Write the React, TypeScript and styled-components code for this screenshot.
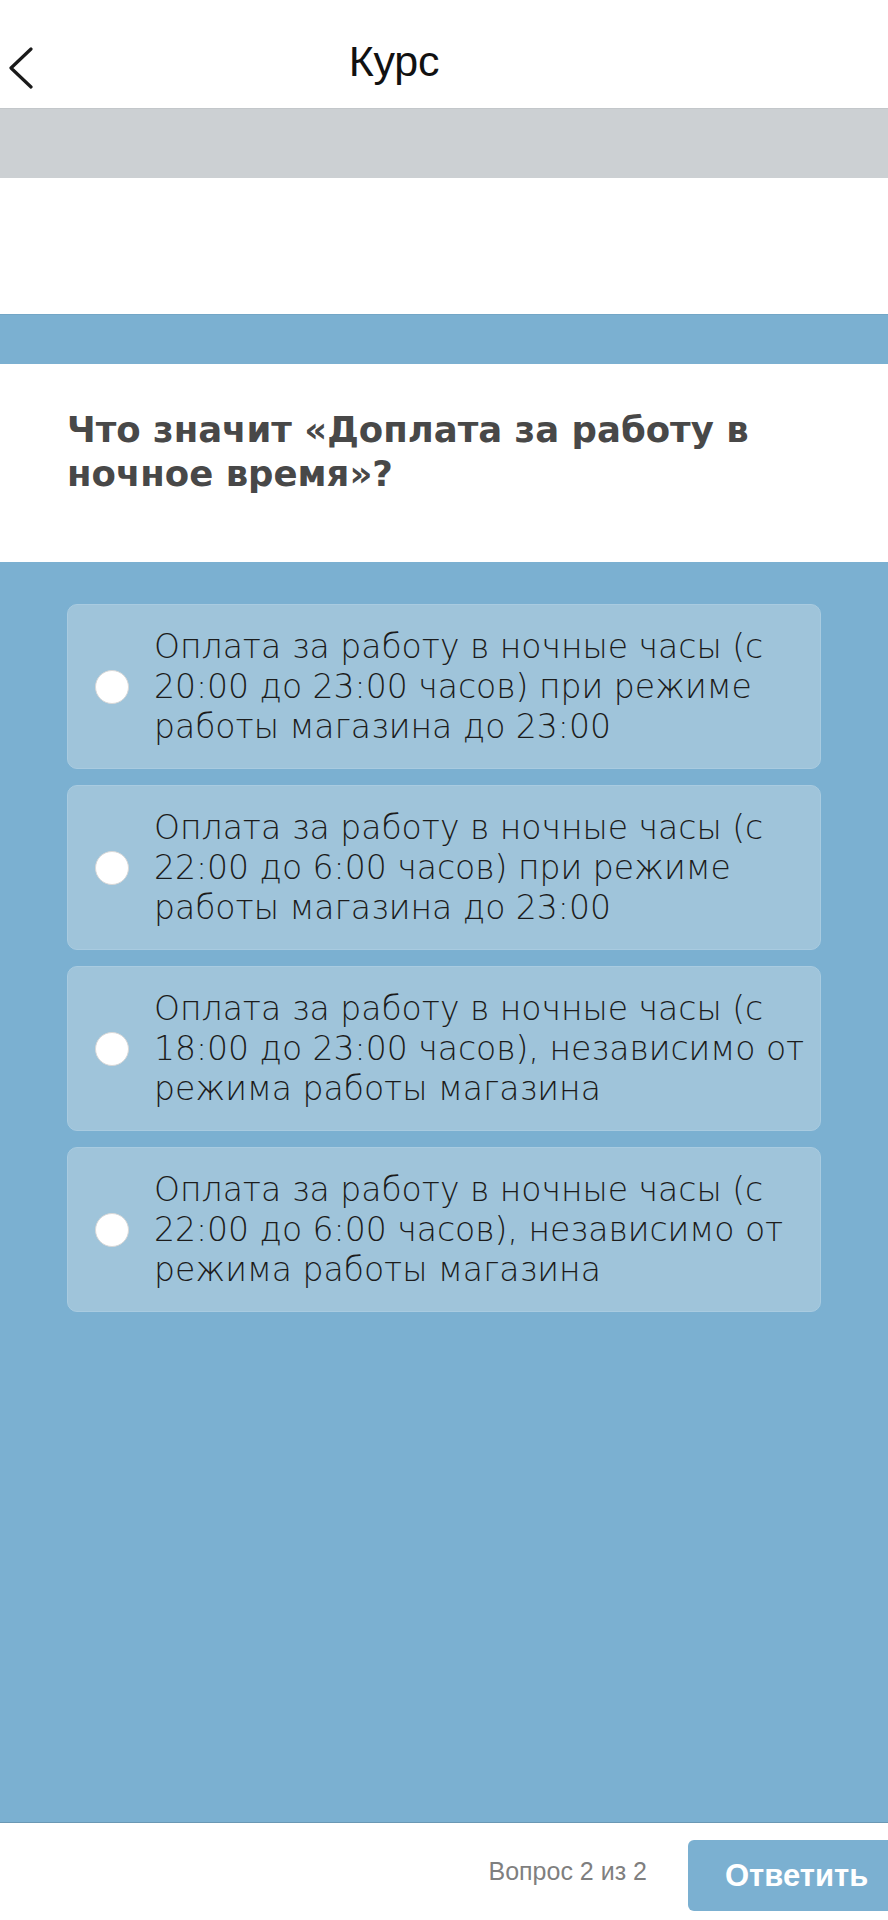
import React from "react";
import styled, { createGlobalStyle } from "styled-components";

const Global = createGlobalStyle`
  html, body { margin: 0; padding: 0; background: #ffffff; }
  body { font-family: "Liberation Sans", Arial, sans-serif; }
  * { box-sizing: border-box; }
`;

const Page = styled.div`
  width: 888px;
  min-height: 1920px;
  display: flex;
  flex-direction: column;
  overflow: hidden;
`;

const Header = styled.header`
  height: 108px;
  display: flex;
  align-items: center;
  padding-top: 14px;
  background: #ffffff;
`;

const BackButton = styled.button`
  width: 56px;
  height: 44px;
  padding: 0 0 0 8px;
  margin-top: 14px;
  border: none;
  background: transparent;
  display: flex;
  align-items: center;
  cursor: pointer;
`;

const Title = styled.h1`
  flex: 1;
  margin: 0;
  text-align: center;
  font-family: "Liberation Sans", Arial, sans-serif;
  font-weight: 400;
  font-size: 43px;
  line-height: 50px;
  color: #111111;
  letter-spacing: -0.3px;
`;

const HeaderSpacer = styled.div`
  width: 156px;
`;

const ProgressBar = styled.div`
  height: 70px;
  background: #ccd0d3;
  box-shadow: inset 0 1px 0 #c3c7ca;
`;

const WhiteGap = styled.div`
  height: 136px;
  background: #ffffff;
`;

const BlueBand = styled.div`
  height: 50px;
  background: #7bb0d1;
  border-top: 1px solid #73a6c6;
`;

const QuestionBlock = styled.section`
  height: 198px;
  background: #ffffff;
  padding: 44px 67px 0;
`;

const Question = styled.h2`
  margin: 0;
  font-family: "DejaVu Sans", Inter, sans-serif;
  font-weight: 700;
  font-size: 35.5px;
  line-height: 44px;
  color: #484848;
  letter-spacing: 0px;
`;

const Answers = styled.main`
  flex: 1;
  background: #7bb0d1;
  padding: 42px 67px 0;
  display: flex;
  flex-direction: column;
  gap: 16px;
`;

const Option = styled.label`
  height: 165px;
  display: flex;
  align-items: center;
  gap: 25px;
  padding: 0 12px 0 27px;
  background: #9fc4da;
  border: 1px solid #a9cbe0;
  border-radius: 10px;
  cursor: pointer;
`;

const Radio = styled.span`
  flex: none;
  width: 34px;
  height: 34px;
  border-radius: 50%;
  background: #ffffff;
  border: 1px solid #d8d8d8;
`;

const OptionText = styled.span`
  font-family: "DejaVu Sans ExtraLight", "DejaVu Sans", sans-serif;
  font-weight: 200;
  font-size: 33px;
  line-height: 40px;
  color: #1c1c1c;
  white-space: nowrap;
`;

const Footer = styled.footer`
  height: 98px;
  background: #ffffff;
  border-top: 1px solid #6a98b4;
  display: flex;
  align-items: flex-start;
  padding-top: 17px;
  justify-content: flex-end;
  gap: 41px;
  margin-right: -20px;
`;

const Counter = styled.span`
  margin-top: 17px;
  font-family: "Liberation Sans", Arial, sans-serif;
  font-size: 25px;
  color: #7f7f7f;
`;

const AnswerButton = styled.button`
  width: 220px;
  height: 71px;
  border: none;
  border-radius: 6px;
  background: #7bb0d1;
  color: #ffffff;
  font-family: "Liberation Sans", Arial, sans-serif;
  font-weight: 700;
  font-size: 31px;
  text-align: left;
  padding: 0 0 0 37px;
  cursor: pointer;
`;

const options: string[][] = [
  [
    "Оплата за работу в ночные часы (с",
    "20:00 до 23:00 часов) при режиме",
    "работы магазина до 23:00",
  ],
  [
    "Оплата за работу в ночные часы (с",
    "22:00 до 6:00 часов) при режиме",
    "работы магазина до 23:00",
  ],
  [
    "Оплата за работу в ночные часы (с",
    "18:00 до 23:00 часов), независимо от",
    "режима работы магазина",
  ],
  [
    "Оплата за работу в ночные часы (с",
    "22:00 до 6:00 часов), независимо от",
    "режима работы магазина",
  ],
];

const Chevron = () => (
  <svg width="26" height="42" viewBox="0 0 26 42" fill="none">
    <path
      d="M23 2 L3 21 L23 40"
      stroke="#1a1a1a"
      strokeWidth="3.2"
      strokeLinecap="round"
      strokeLinejoin="round"
    />
  </svg>
);

export default function App() {
  return (
    <>
      <Global />
      <Page>
        <Header>
          <BackButton aria-label="Назад">
            <Chevron />
          </BackButton>
          <Title>Курс</Title>
          <HeaderSpacer />
        </Header>
        <ProgressBar />
        <WhiteGap />
        <BlueBand />
        <QuestionBlock>
          <Question>
            Что значит «Доплата за работу в
            <br />
            ночное время»?
          </Question>
        </QuestionBlock>
        <Answers>
          {options.map((lines, i) => (
            <Option key={i}>
              <Radio />
              <OptionText>
                {lines.map((l, j) => (
                  <React.Fragment key={j}>
                    {l}
                    {j < lines.length - 1 && <br />}
                  </React.Fragment>
                ))}
              </OptionText>
            </Option>
          ))}
        </Answers>
        <Footer>
          <Counter>Вопрос 2 из 2</Counter>
          <AnswerButton>Ответить</AnswerButton>
        </Footer>
      </Page>
    </>
  );
}
